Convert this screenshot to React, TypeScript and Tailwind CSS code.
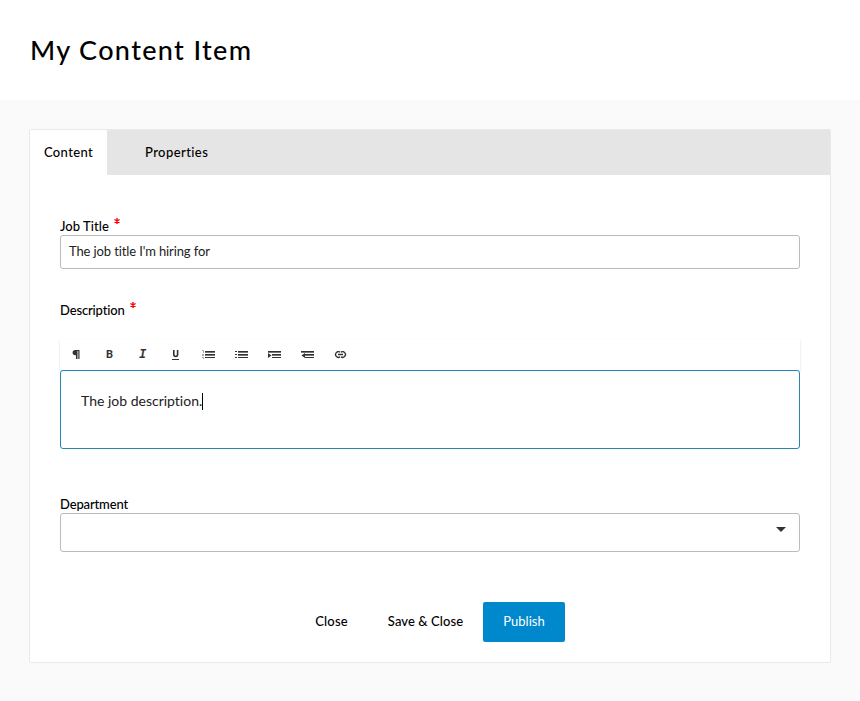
import type { ReactNode } from "react";

function Label({ children, required = false, className = "" }: { children: ReactNode; required?: boolean; className?: string }) {
  return (
    <div className="flex h-5 items-start pt-px text-[13px] leading-5 font-medium whitespace-pre text-black">
      <span className={className}>{children}</span>
      {required && (
        <svg className="mt-[2px] ml-[5px]" width="6" height="6" viewBox="0 0 6 6" stroke="#f00" strokeWidth="1.4">
          <path d="M3 0v6M.4 1.5l5.2 3M5.6 1.5l-5.2 3" />
        </svg>
      )}
    </div>
  );
}

function ListIcon({ kind }: { kind: "ordered" | "bullets" | "indent" | "outdent" }) {
  return (
    <svg width="14" height="9" viewBox="0 0 14 9" fill="#333" shapeRendering="crispEdges">
      {kind === "ordered" && (
        <g fill="none" stroke="#aaa" strokeWidth="1">
          <path d="M0 .5h1.5V3M0 4.5h1.5v1H0M0 7.5h1.5V9" />
        </g>
      )}
      {kind === "bullets" && <path d="M0 1h2v1H0zM0 4h2v1H0zM0 7h2v1H0z" />}
      {(kind === "ordered" || kind === "bullets") && (
        <>
          <path d="M3 2h10v1H3zM3 5h10v1H3z" fill="#777" />
          <path d="M3 1h10v1H3zM3 4h10v1H3zM3 7h10v1H3z" />
        </>
      )}
      {(kind === "indent" || kind === "outdent") && (
        <>
          <path d="M0 2h13v1H0zM4 5h9v1H4z" fill="#777" />
          <path d="M0 1h13v1H0zM4 4h9v1H4zM4 7h9v1H4z" />
        </>
      )}
      {kind === "indent" && <path d="M0 3v5l3.5-2.5z" shapeRendering="auto" />}
      {kind === "outdent" && <path d="M4 3v5L.5 5.5z" shapeRendering="auto" />}
    </svg>
  );
}

function ToolButton({ children }: { children: ReactNode }) {
  return <button className="flex h-8 w-[33px] items-center justify-center">{children}</button>;
}

function Toolbar() {
  return (
    <div className="flex h-[31px] w-full items-center bg-white text-[#333] shadow-[0_1px_2px_rgba(0,0,0,0.16)]">
      <ToolButton>
        <svg className="-translate-x-px" width="8" height="9" viewBox="0 0 8 9" fill="#333">
          <path d="M3.2 0H7.5v9H6.3V1H5.5v8H4V5.2H3.2a2.6 2.6 0 0 1 0-5.2z" />
        </svg>
      </ToolButton>
      <ToolButton><span className="pt-[2px] font-['Roboto',sans-serif] text-[11px] font-bold">B</span></ToolButton>
      <ToolButton><span className="pt-px font-['Liberation_Mono',monospace] text-[12px] font-bold italic">I</span></ToolButton>
      <ToolButton>
        <svg width="8" height="10" viewBox="0 0 8 10" fill="none" stroke="#333">
          <path d="M1.8 0v4.6a1.9 1.9 0 0 0 3.8 0V0" strokeWidth="1.6" />
          <path d="M0 9.5h7" />
        </svg>
      </ToolButton>
      <ToolButton><ListIcon kind="ordered" /></ToolButton>
      <ToolButton><ListIcon kind="bullets" /></ToolButton>
      <ToolButton><ListIcon kind="indent" /></ToolButton>
      <ToolButton><ListIcon kind="outdent" /></ToolButton>
      <ToolButton>
        <svg width="13" height="8" viewBox="0 0 13 8" fill="none" stroke="#333" strokeWidth="1.4">
          <path d="M6 1.2A2.8 2.8 0 1 0 6 5.8M7 1.2a2.8 2.8 0 1 1 0 4.6M4 3.5h5" />
        </svg>
      </ToolButton>
    </div>
  );
}

export default function App() {
  return (
    <div className="h-[701px] w-[860px] overflow-hidden bg-[#fafafa] font-['Lato','Liberation_Sans',sans-serif] text-black [font-variant-ligatures:none]">
      <header className="h-[100px] bg-white pt-[30px] pl-[30px]">
        <h1 className="text-[27px] leading-10 font-medium tracking-[1.35px]">My Content Item</h1>
      </header>
      <main className="mt-[29px] ml-[29px] h-[534px] w-[802px] rounded-[2px] border border-[#e9e9e9] bg-white">
        <nav className="flex h-[45px] bg-[#e5e5e5] text-[13px] font-medium">
          <button className="w-[77px] bg-white pt-px tracking-[0.38px]">Content</button>
          <button className="ml-[38px] pt-px tracking-[0.42px]">Properties</button>
        </nav>
        <form className="flex flex-col px-[30px] pt-[40px]">
          <Label required className="tracking-[0.05px]">Job Title</Label>
          <div className="flex h-[34px] items-center rounded-[3px] border border-[#bbb] px-2 text-[13px] tracking-[-0.12px] text-[#222]">The job title I'm hiring for</div>
          <div className="mt-[30px]"><Label required className="tracking-[-0.15px]">Description</Label></div>
          <div className="mt-[20px]"><Toolbar /></div>
          <div className="relative flex h-[79px] items-start rounded-[3px] border border-[#2685b5] bg-white pt-[20px] pl-[20px] text-[14px] leading-5 text-[#222]">
            <span>The job description.</span>
            <span className="mt-[2px] h-[17px] w-px bg-black" />
          </div>
          <div className="mt-[44px]"><Label className="tracking-[-0.15px]">Department</Label></div>
          <div className="flex h-[39px] items-center justify-end rounded-[3px] border border-[#bbb] pr-[13px] pb-[6px]">
            <svg width="10" height="5" viewBox="0 0 10 5"><path d="M0 0h10L5 5z" fill="#333" /></svg>
          </div>
        </form>
        <div className="mt-[50px] flex h-10 items-center pl-[285px] text-[13px] font-medium">
          <button className="w-[33px] tracking-[0.15px] whitespace-nowrap">Close</button>
          <button className="ml-[39px] w-[77px] tracking-[0.08px] whitespace-nowrap">Save &amp; Close</button>
          <button className="ml-[19px] h-10 w-[82px] rounded-[2px] bg-[#0088cc] font-normal text-white">Publish</button>
        </div>
      </main>
    </div>
  );
}
